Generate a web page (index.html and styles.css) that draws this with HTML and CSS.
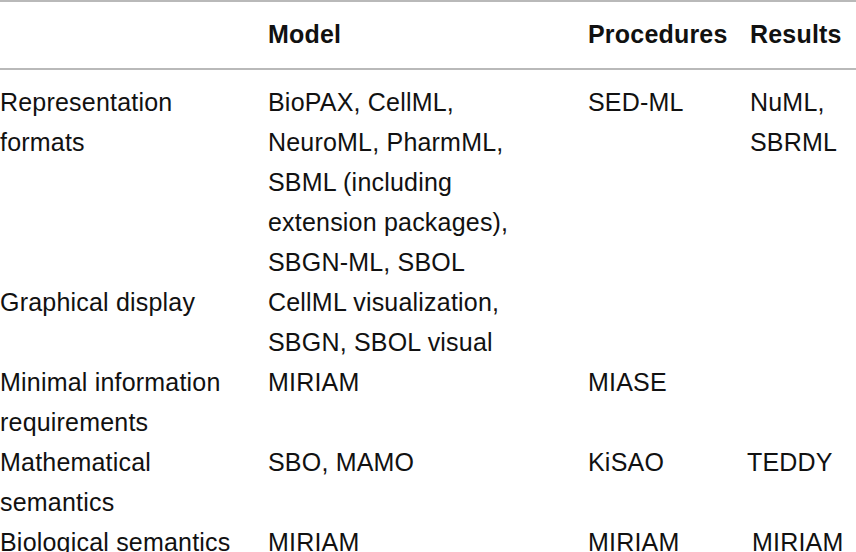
FILE: index.html
```html
<!DOCTYPE html>
<html>
<head>
<meta charset="utf-8">
<link rel="stylesheet" href="styles.css">
</head>
<body>
<div class="table">
  <div class="row head">
    <div class="cell"></div>
    <div class="cell">Model</div>
    <div class="cell">Procedures</div>
    <div class="cell">Results</div>
  </div>
  <div class="body">
    <div class="row">
      <div class="cell">Representation<br>formats</div>
      <div class="cell">BioPAX, CellML,<br>NeuroML, PharmML,<br>SBML (including<br>extension packages),<br>SBGN-ML, SBOL</div>
      <div class="cell">SED-ML</div>
      <div class="cell">NuML,<br>SBRML</div>
    </div>
    <div class="row">
      <div class="cell">Graphical display</div>
      <div class="cell">CellML visualization,<br>SBGN, SBOL visual</div>
      <div class="cell"></div>
      <div class="cell"></div>
    </div>
    <div class="row">
      <div class="cell">Minimal information<br>requirements</div>
      <div class="cell">MIRIAM</div>
      <div class="cell">MIASE</div>
      <div class="cell"></div>
    </div>
    <div class="row">
      <div class="cell">Mathematical<br>semantics</div>
      <div class="cell">SBO, MAMO</div>
      <div class="cell">KiSAO</div>
      <div class="cell teddy">TEDDY</div>
    </div>
    <div class="row">
      <div class="cell">Biological semantics</div>
      <div class="cell">MIRIAM</div>
      <div class="cell">MIRIAM</div>
      <div class="cell shift">MIRIAM</div>
    </div>
  </div>
</div>
</body>
</html>
```

FILE: styles.css
```css
html, body {
  margin: 0;
  padding: 0;
  background: #ffffff;
}

body {
  font-family: "Liberation Sans", Arial, sans-serif;
  font-size: 25px;
  line-height: 40px;
  color: #111111;
  width: 856px;
  height: 552px;
  overflow: hidden;
}

.table {
  border-top: 2px solid #b9b9b9;
}

.row {
  display: grid;
  grid-template-columns: 268px 320px 162px 1fr;
}

.head {
  font-weight: bold;
  padding: 12px 0 14px;
  border-bottom: 2px solid #b9b9b9;
}

.body {
  padding-top: 12px;
}

.cell {
  white-space: nowrap;
  letter-spacing: 0.2px;
}

.teddy {
  margin-left: -3px;
}

.shift {
  margin-left: 2px;
}
```
